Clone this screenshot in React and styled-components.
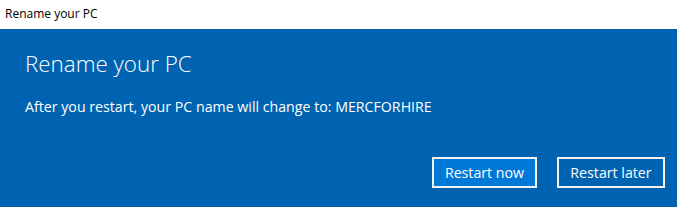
import React from 'react';
import styled, { createGlobalStyle } from 'styled-components';

const GlobalStyle = createGlobalStyle`
  html, body {
    margin: 0;
    padding: 0;
    background: #0063b1;
  }
  body {
    font-family: "Open Sans", "Noto Sans", sans-serif;
  }
`;

const Window = styled.div`
  display: flex;
  flex-direction: column;
  width: 677px;
  height: 207px;
  overflow: hidden;
`;

const TitleBar = styled.div`
  height: 29px;
  background: #ffffff;
  color: #000000;
  font-size: 12px;
  display: flex;
  align-items: center;
  padding-left: 5px;
  padding-bottom: 2px;
  box-sizing: border-box;
`;

const Body = styled.div`
  flex: 1;
  background: #0063b1;
  color: #ffffff;
  display: flex;
  flex-direction: column;
  padding: 20px 12px 0 25px;
`;

const Heading = styled.h1`
  margin: 0;
  font-size: 22.4px;
  font-weight: 300;
  line-height: 30px;
`;

const Message = styled.p`
  margin: 18px 0 0;
  font-size: 14.2px;
  line-height: 20px;
`;

const Actions = styled.div`
  display: flex;
  justify-content: flex-end;
  gap: 20px;
  margin-top: 40px;
`;

const Button = styled.button`
  box-sizing: border-box;
  height: 31px;
  width: ${p => p.w}px;
  border: 2px solid #f2f2f2;
  background: ${p => (p.primary ? '#0078d7' : '#0063b1')};
  color: #ffffff;
  font-family: inherit;
  font-size: 14.2px;
  padding: 0;
`;

export default function App() {
  return (
    <Window>
      <GlobalStyle />
      <TitleBar>Rename your PC</TitleBar>
      <Body>
        <Heading>Rename your PC</Heading>
        <Message>After you restart, your PC name will change to: MERCFORHIRE</Message>
        <Actions>
          <Button primary w={105}>Restart now</Button>
          <Button w={108}>Restart later</Button>
        </Actions>
      </Body>
    </Window>
  );
}
